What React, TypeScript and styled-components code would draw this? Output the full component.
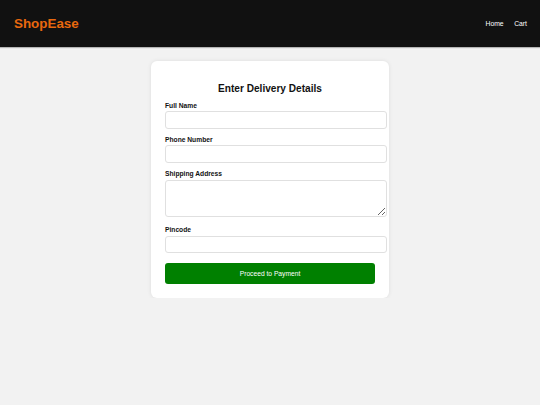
import styled, { createGlobalStyle } from 'styled-components';

const GlobalStyle = createGlobalStyle`
	html, body {
		margin: 0;
		padding: 0;
		background: #f2f2f2;
		font-family: 'Liberation Sans', Arial, sans-serif;
	}
`;

const Header = styled.header`
	height: 47px;
	background: #111;
	display: flex;
	align-items: center;
	justify-content: space-between;
	padding: 0 13px 0 14px;
	box-shadow: 0 1px 1px rgba(0, 0, 0, 0.25);
`;

const Logo = styled.div`
	color: #e8680e;
	font-size: 13.4px;
	font-weight: bold;
`;

const Nav = styled.nav`
	display: flex;
	gap: 10.5px;
`;

const NavLink = styled.a`
	color: #fff;
	font-size: 6.8px;
	text-decoration: none;
`;

const Card = styled.form`
	width: 238px;
	box-sizing: border-box;
	margin: 14px auto 0;
	padding: 14px;
	background: #fff;
	border-radius: 6px;
	box-shadow: 0 0 4px rgba(0, 0, 0, 0.09);
`;

const Title = styled.h2`
	margin: 8px 0 7px;
	font-size: 10.1px;
	font-weight: bold;
	text-align: center;
	color: #111;
	line-height: 11.5px;
`;

const Label = styled.label`
	display: block;
	font-size: 6.7px;
	font-weight: bold;
	color: #111;
	line-height: 7.7px;
	margin-bottom: 2px;
`;

const Input = styled.input<{ $last?: boolean }>`
	display: block;
	box-sizing: border-box;
	width: calc(100% + 12px);
	height: 17.5px;
	margin: 0 0 ${(p) => (p.$last ? 0 : 7)}px;
	padding: 4px 5px;
	border: 1px solid #e0e0e0;
	border-radius: 3px;
	font-family: inherit;
	font-size: 6.7px;
	background: #fff;
	outline: none;
`;

const TextArea = styled.textarea<{ $rows: number }>`
	display: block;
	box-sizing: border-box;
	width: calc(100% + 12px);
	height: ${(p) => p.$rows * 12.4}px;
	margin: 0 0 9px;
	padding: 4px 5px;
	border: 1px solid #e0e0e0;
	border-radius: 3px;
	font-family: inherit;
	font-size: 6.7px;
	outline: none;
`;

const Button = styled.button`
	display: block;
	width: 100%;
	height: 21px;
	margin-top: 10px;
	border: none;
	border-radius: 3px;
	background: #008000;
	color: #fff;
	font-family: inherit;
	font-size: 6.7px;
	cursor: pointer;
`;

const Field = ({ label, children }: { label: string; children: React.ReactNode }) => (
	<div>
		<Label>{label}</Label>
		{children}
	</div>
);

const App = () => {
	return (
		<>
			<GlobalStyle />
			<Header>
				<Logo>ShopEase</Logo>
				<Nav>
					<NavLink href="#">Home</NavLink>
					<NavLink href="#">Cart</NavLink>
				</Nav>
			</Header>
			<Card onSubmit={(e) => e.preventDefault()}>
				<Title>Enter Delivery Details</Title>
				<Field label="Full Name">
					<Input type="text" />
				</Field>
				<Field label="Phone Number">
					<Input type="tel" />
				</Field>
				<Field label="Shipping Address">
					<TextArea $rows={3} />
				</Field>
				<Field label="Pincode">
					<Input type="text" $last />
				</Field>
				<Button type="submit">Proceed to Payment</Button>
			</Card>
		</>
	);
};

export default App;
